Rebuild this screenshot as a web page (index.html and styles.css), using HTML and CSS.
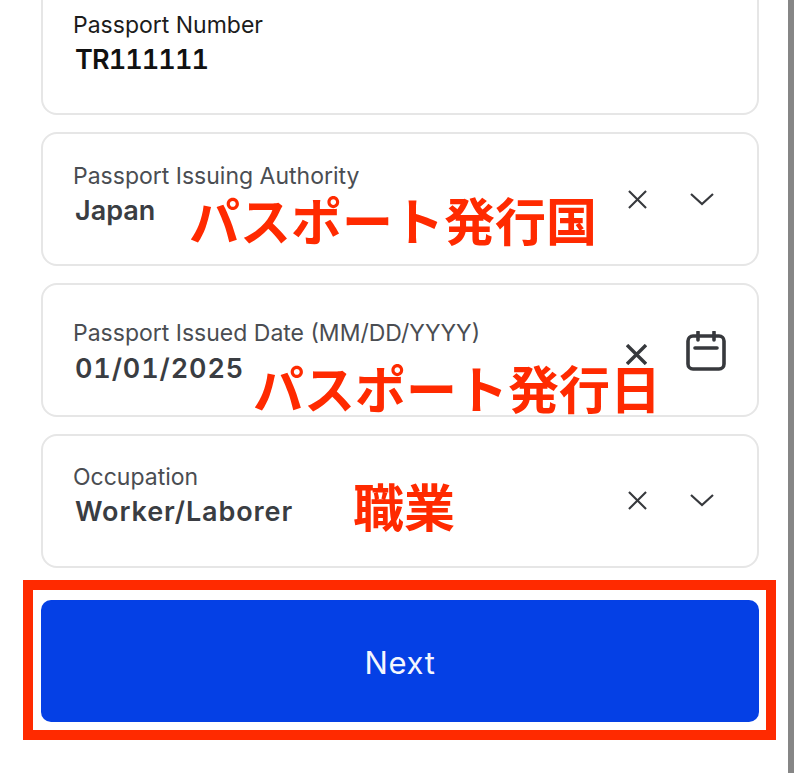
FILE: index.html
```html
<!DOCTYPE html>
<html lang="en">
<head>
    <meta charset="UTF-8">
    <title>Passport details</title>
    <link rel="stylesheet" href="styles.css">
</head>
<body>
    <div class="scrollbar"></div>
    <form class="form">
        <div class="field">
            <div class="field-text">
                <div class="label label-dark">Passport Number</div>
                <div class="value value-dark">TR111111</div>
            </div>
        </div>

        <div class="field">
            <div class="field-text">
                <div class="label">Passport Issuing Authority</div>
                <div class="value">Japan</div>
            </div>
            <svg class="icon-x" viewBox="0 0 20 20"><path d="M1 1L19 19M19 1L1 19"/></svg>
            <svg class="icon-chevron" viewBox="0 0 24 14"><path d="M1 2L12 12L23 2"/></svg>
            <span class="note note-authority">パスポート発行国</span>
        </div>

        <div class="field field-date">
            <div class="field-text">
                <div class="label">Passport Issued Date (MM/DD/YYYY)</div>
                <div class="value value-date">01/01/2025</div>
            </div>
            <svg class="icon-x icon-x-bold" viewBox="0 0 20 20"><path d="M1 1L19 19M19 1L1 19"/></svg>
            <svg class="icon-calendar" viewBox="0 0 40 40">
                <rect x="2" y="5" width="36" height="33" rx="5"/>
                <path d="M12 1V9M28 1V9M9 17H31"/>
            </svg>
            <span class="note note-date">パスポート発行日</span>
        </div>

        <div class="field field-job">
            <div class="field-text">
                <div class="label">Occupation</div>
                <div class="value value-job">Worker/Laborer</div>
            </div>
            <svg class="icon-x" viewBox="0 0 20 20"><path d="M1 1L19 19M19 1L1 19"/></svg>
            <svg class="icon-chevron" viewBox="0 0 24 14"><path d="M1 2L12 12L23 2"/></svg>
            <span class="note note-job">職業</span>
        </div>

        <div class="highlight">
            <button type="button" class="next">Next</button>
        </div>
    </form>
</body>
</html>
```

FILE: styles.css
```css
* {
    margin: 0;
    padding: 0;
    box-sizing: border-box;
}

body {
    width: 800px;
    height: 774px;
    overflow: hidden;
    position: relative;
    background-color: #fff;
    font-family: "Inter", "Noto Sans CJK JP", sans-serif;
}

.scrollbar {
    position: absolute;
    top: 0;
    left: 788px;
    width: 6px;
    height: 773px;
    background-color: #868686;
}

.form {
    width: 718px;
    margin: -19px 0 0 41px;
    display: flex;
    flex-direction: column;
    gap: 17px;
}

.field {
    position: relative;
    height: 134px;
    padding: 28px 30px 0 30px;
    display: flex;
    align-items: flex-start;
    border: 2px solid #e6e6e6;
    border-radius: 16px;
    background-color: #fff;
}

.field-date {
    padding-top: 34px;
}

.field-job {
    padding-top: 27px;
}

.field-text {
    flex: 1;
}

.label {
    font-size: 23px;
    line-height: 28px;
    color: #4a4d52;
}

.label-dark {
    color: #1c1c1c;
}

.value {
    margin-top: 5px;
    margin-left: 2px;
    font-size: 27px;
    line-height: 32px;
    font-weight: 600;
    color: #3a3d42;
}

.value-dark {
    color: #111;
    font-variant-numeric: tabular-nums;
    letter-spacing: -0.9px;
}

.value-date {
    margin-top: 6px;
    font-variant-numeric: tabular-nums;
    letter-spacing: 0.9px;
}

.value-job {
    letter-spacing: 0.9px;
}

.icon-x {
    width: 19px;
    height: 19px;
    margin: 28px 0 0 0;
    fill: none;
    stroke: #37393d;
    stroke-width: 2.2;
}

.icon-x-bold {
    width: 21px;
    height: 21px;
    margin-top: 25px;
    stroke-width: 3.2;
}

.icon-chevron {
    width: 24px;
    height: 14px;
    margin: 30px 13px 0 43px;
    fill: none;
    stroke: #37393d;
    stroke-width: 2.2;
}

.icon-calendar {
    width: 40px;
    height: 40px;
    margin: 12px 1px 0 39px;
    fill: none;
    stroke: #37393d;
    stroke-width: 3.6;
    stroke-linecap: round;
}

.note {
    position: absolute;
    white-space: nowrap;
    font-size: 51px;
    line-height: 50px;
    font-weight: 700;
    color: #ff2a00;
    font-family: "Noto Sans CJK JP", sans-serif;
}

.note-authority {
    left: 146px;
    top: 60px;
}

.note-date {
    left: 210px;
    top: 77px;
}

.note-job {
    left: 310px;
    top: 44px;
}

.highlight {
    width: 753px;
    height: 160px;
    margin: -5px 0 0 -18px;
    padding: 10px 8px;
    border: 10px solid #ff2a00;
    background-color: #fff;
}

.next {
    display: block;
    width: 718px;
    height: 122px;
    border: none;
    border-radius: 10px;
    background-color: #0540e5;
    color: #f4f6fe;
    font-family: inherit;
    font-size: 31px;
    letter-spacing: 0.6px;
    padding-top: 3px;
}
```
